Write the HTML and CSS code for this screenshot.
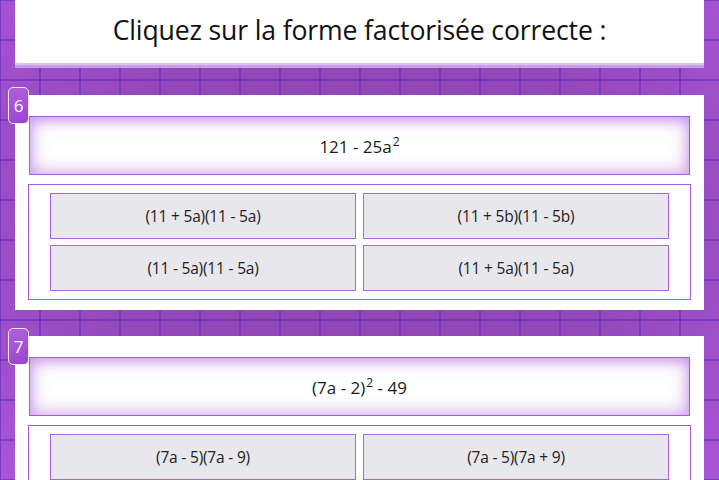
FILE: index.html
```html
<!DOCTYPE html>
<html lang="fr">
<head>
<meta charset="utf-8">
<title>Factorisation</title>
<link rel="stylesheet" href="styles.css">
</head>
<body>
<div class="page">
  <header class="title-bar">
    <h1 class="title">Cliquez sur la forme factorisée correcte :</h1>
  </header>

  <section class="card">
    <span class="badge">6</span>
    <div class="question"><span class="expr">121 - 25a<sup>2</sup></span></div>
    <div class="answers">
      <button class="answer">(11 + 5a)(11 - 5a)</button>
      <button class="answer">(11 + 5b)(11 - 5b)</button>
      <button class="answer">(11 - 5a)(11 - 5a)</button>
      <button class="answer">(11 + 5a)(11 - 5a)</button>
    </div>
  </section>

  <section class="card">
    <span class="badge">7</span>
    <div class="question"><span class="expr">(7a - 2)<sup>2</sup> - 49</span></div>
    <div class="answers">
      <button class="answer">(7a - 5)(7a - 9)</button>
      <button class="answer">(7a - 5)(7a + 9)</button>
      <button class="answer">(7a - 9)(7a + 5)</button>
      <button class="answer">(7a + 5)(7a - 9)</button>
    </div>
  </section>
</div>
</body>
</html>
```

FILE: styles.css
```css
* { box-sizing: border-box; }

html, body {
  margin: 0;
  height: 100%;
  overflow: hidden;
}

body {
  font-family: "Open Sans", "Noto Sans", "DejaVu Sans", sans-serif;
  color: #1a1a1a;
  background-color: #9a4cc2;
  background-image:
    linear-gradient(to right, transparent 38px, rgba(110, 50, 190, 0.75) 38px, rgba(110, 50, 190, 0.75) 40px),
    linear-gradient(to bottom, transparent 38px, rgba(110, 50, 190, 0.75) 38px, rgba(110, 50, 190, 0.75) 40px),
    radial-gradient(ellipse 70% 75% at 50% 45%, #8f46b2 0%, #9449ba 55%, #a855d8 100%);
  background-size: 40px 40px, 40px 40px, 100% 100%;
  background-position: 1px 1px, 1px 1px, 0 0;
}

.page {
  padding: 0 15px;
}

.title-bar {
  height: 63px;
  background: #fff;
  display: flex;
  align-items: center;
  justify-content: center;
  box-shadow: 0 2px 0 0 #dcc2f0, 0 5px 0 0 #c69de6;
}

.title {
  margin: 0;
  font-weight: 400;
  font-size: 26.6px;
  letter-spacing: -0.15px;
  color: #111;
  padding-bottom: 3px;
}

.card {
  position: relative;
  background: #fff;
  margin-top: 26px;
  padding: 21px 14px 10px 14px;
}

.title-bar + .card {
  margin-top: 32px;
}

.badge {
  position: absolute;
  left: -7px;
  top: -8px;
  width: 21px;
  height: 37px;
  border: 1px solid #f3e6fb;
  border-radius: 5px;
  background: linear-gradient(160deg, #b25ee0, #9a45cc);
  color: #fff;
  font-size: 17px;
  display: flex;
  align-items: center;
  justify-content: center;
}

.question {
  height: 59px;
  border: 1px solid #a95ae0;
  background: #fff;
  box-shadow: inset 0 0 16px 3px rgba(180, 110, 225, 0.55), inset 0 4px 10px rgba(180, 110, 225, 0.35);
  display: flex;
  align-items: center;
  justify-content: center;
  font-size: 17px;
  color: #1a1a1a;
  margin: 0 0 9px 0;
}

.expr {
  white-space: pre;
  padding-top: 2px;
}

.question sup {
  font-size: 12px;
  line-height: 0;
  vertical-align: 0.55em;
  margin-left: 1px;
}

.answers {
  border: 1px solid #a95ae0;
  margin: 0 -1px;
  padding: 8px 21px 8px 21px;
  display: grid;
  grid-template-columns: 1fr 1fr;
  column-gap: 7px;
  row-gap: 6px;
}

.answer {
  height: 46px;
  border: 1px solid #b062e2;
  background: #e8e7ec;
  font-family: inherit;
  font-size: 15.5px;
  letter-spacing: -0.2px;
  color: #222;
  padding: 0;
  cursor: pointer;
}
```
